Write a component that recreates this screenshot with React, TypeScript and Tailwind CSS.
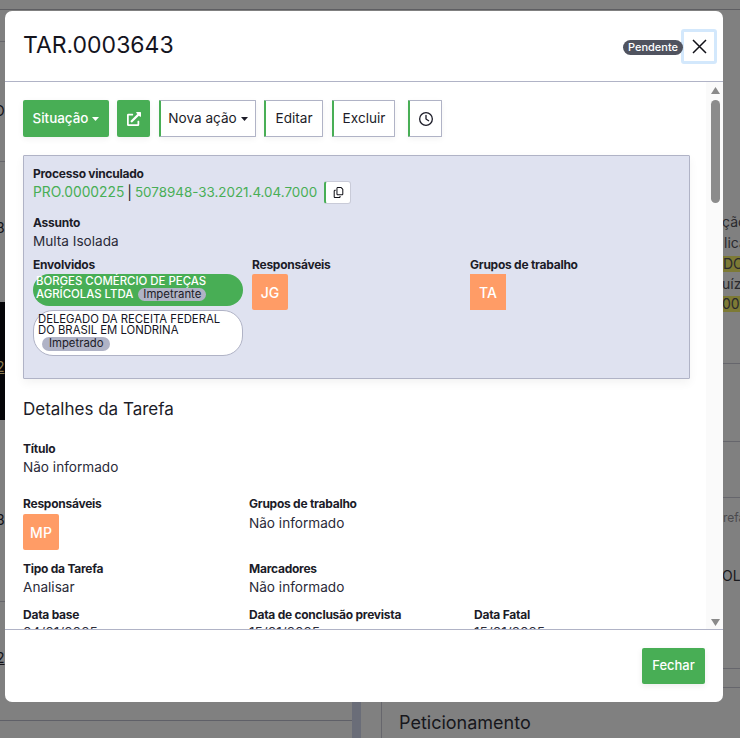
import React from "react";
import { FaRegCopy, FaRegClock } from "react-icons/fa6";
import { FaExternalLinkAlt } from "react-icons/fa";

const Caret = ({ color }: { color: string }) => (
  <svg width="7" height="4" viewBox="0 0 7 4" className="ml-1 mt-px" fill={color}>
    <path d="M0 0h7L3.5 4z" />
  </svg>
);

const Outline = ({ className, children }: { className: string; children: React.ReactNode }) => (
  <button className={`h-[37px] flex items-center justify-center bg-white border border-[#b0b3c6] border-l-[2px] border-l-[#48ae55] text-[13.6px] text-[#1c1c28] shadow-[0_2px_6px_rgba(0,0,0,0.05)] rounded-[1px] ${className}`}>
    {children}
  </button>
);

const Label = ({ children, className = "" }: { children: React.ReactNode; className?: string }) => (
  <div className={`text-[12px] leading-[14px] font-bold tracking-[-0.25px] text-[#1c1c28] ${className}`}>{children}</div>
);

const Value = ({ children, className = "" }: { children: React.ReactNode; className?: string }) => (
  <div className={`text-[13.6px] leading-[18px] text-[#2a2a38] ${className}`}>{children}</div>
);

const Avatar = ({ t, className = "" }: { t: string; className?: string }) => (
  <div className={`w-9 h-9 bg-[#ff9c66] text-white text-[14px] font-medium flex items-center justify-center ${className}`}>{t}</div>
);

const Bg = ({ x, y, w, h, c, children, cls = "" }: { x: number; y: number; w?: number; h?: number; c?: string; children?: React.ReactNode; cls?: string }) => (
  <div className={`absolute whitespace-nowrap ${cls}`} style={{ left: x, top: y, width: w, height: h, background: c }}>{children}</div>
);

export default function App() {
  return (
    <div className="relative w-[740px] h-[738px] overflow-hidden bg-[#808080] text-[#111118]" style={{ fontFamily: "Inter, 'Noto Sans', sans-serif" }}>
      {/* page dimmed behind the dialog */}
      <div aria-hidden className="absolute inset-0 text-[14px] leading-[20px]">
        <Bg x={0} y={9} w={740} h={1} c="#5e5e62" />
        <Bg x={0} y={41} w={5} h={1} c="#66666c" />
        <Bg x={0} y={161} w={5} h={1} c="#66666c" />
        <Bg x={0} y={302} w={5} h={118} c="#050508" />
        <Bg x={0} y={601} w={5} h={1} c="#66666c" />
        <Bg x={0} y={720} w={352} h={1} c="#5f6068" />
        <Bg x={352} y={702} w={9} h={36} c="#6a6d78" />
        <Bg x={381} y={702} w={1} h={36} c="#66666c" />
        <Bg x={-6} y={101}>O</Bg>
        <Bg x={-4} y={218}>8</Bg>
        <Bg x={-4} y={357} cls="text-[#8a7a50] underline">2</Bg>
        <Bg x={-4} y={510}>3</Bg>
        <Bg x={-4} y={648} cls="underline">2</Bg>
        <Bg x={723} y={363} w={17} h={1} c="#66666c" />
        <Bg x={723} y={441} w={17} h={1} c="#66666c" />
        <Bg x={723} y={497} w={17} h={1} c="#66666c" />
        <Bg x={723} y={668} w={17} h={1} c="#66666c" />
        <Bg x={723} y={687} w={17} h={1} c="#66666c" />
        <Bg x={723} y={256} w={17} h={16} c="#7d7a35" />
        <Bg x={723} y={296} w={17} h={16} c="#7d7a35" />
        <Bg x={722} y={212} cls="text-[#2a2a2e]">ção</Bg>
        <Bg x={724} y={233} cls="text-[#2a2a2e]">lica</Bg>
        <Bg x={723} y={254} cls="text-[#2a2a2e]">DO</Bg>
        <Bg x={722} y={274} cls="text-[#2a2a2e]">uízo</Bg>
        <Bg x={722} y={294} cls="text-[#2a2a2e]">000</Bg>
        <Bg x={723} y={508} cls="text-[12px] text-[#4a4a4e]">refa</Bg>
        <Bg x={722} y={566} cls="text-[#1a1a1e]">OLH</Bg>
        <Bg x={399} y={712} cls="text-[18px] leading-[22px] text-[#17171c]">Peticionamento</Bg>
      </div>

      {/* dialog */}
      <div className="absolute left-[5px] top-[11px] w-[718px] h-[691px] bg-white rounded-[7px] flex flex-col overflow-hidden">
        <header className="h-[71px] shrink-0 border-b border-[#b0b3c6] flex items-start pl-[18px] pr-[6px]">
          <h1 className="mt-[19px] text-[23px] leading-[30px] font-normal text-[#14141e]">TAR.0003643</h1>
          <div className="ml-auto mt-[29px] h-[15px] px-[5px] rounded-full bg-[#50535f] text-white text-[11px] leading-[15px] font-medium -mr-[2px] relative z-10">Pendente</div>
          <button className="mt-[18px] w-[36px] h-[35px] bg-white border-[3px] border-[#d3e8fc] rounded-[3px] flex items-center justify-center">
            <svg width="15" height="15" viewBox="0 0 15 15" stroke="#111118" strokeWidth="1.5" fill="none"><path d="M1 1l13 13M14 1L1 14" /></svg>
          </button>
        </header>

        <div className="flex-1 min-h-0 flex">
          <main className="w-[701px] overflow-hidden pl-[18px] pr-4 pt-[18px]">
            <div className="flex">
              <button className="h-[37px] w-[86px] rounded-[2px] bg-[#48ae55] text-white text-[13.4px] font-medium flex items-center justify-center shadow-[0_2px_6px_rgba(0,0,0,0.06)]">
                Situação<Caret color="#fff" />
              </button>
              <button className="ml-2 h-[37px] w-[33px] rounded-[2px] bg-[#48ae55] text-white flex items-center justify-center shadow-[0_2px_6px_rgba(0,0,0,0.06)]">
                <FaExternalLinkAlt size={14} />
              </button>
              <Outline className="ml-[9px] w-[97px]">Nova ação<Caret color="#1c1c28" /></Outline>
              <Outline className="ml-2 w-[59px]">Editar</Outline>
              <Outline className="ml-[9px] w-[63px]">Excluir</Outline>
              <Outline className="ml-[13px] w-[34px]"><FaRegClock size={14} /></Outline>
            </div>

            <section className="mt-[18px] h-[224px] bg-[#dfe2f0] border border-[#b0b3c6] rounded-[1px] pl-[9px] pt-[11px] shadow-[0_4px_10px_rgba(0,0,0,0.05)]">
              <Label>Processo vinculado</Label>
              <div className="flex items-center h-[24px] mt-[-1px]">
                <span className="text-[13.8px] text-[#48ae55]">PRO.0000225</span>
                <span className="text-[14px] mx-[3px] text-[#1c1c28]">|</span>
                <span className="text-[13.4px] text-[#48ae55]">5078948-33.2021.4.04.7000</span>
                <button className="ml-[7px] w-[27px] h-[23px] bg-white border border-[#c9cbd8] border-l-[2px] border-l-[#48ae55] rounded-[3px] flex items-center justify-center">
                  <FaRegCopy size={11} />
                </button>
              </div>
              <Label className="mt-[12px]">Assunto</Label>
              <Value className="mt-[2px]">Multa Isolada</Value>
              <div className="flex mt-[8px]">
                <div className="w-[219px]">
                  <Label>Envolvidos</Label>
                  <div className="mt-[2px] w-[210px] h-[32px] rounded-[16px] bg-[#48ae55] pl-[3px] pt-[1px] text-white text-[11.4px] leading-[13px] font-medium">
                    BORGES COMÉRCIO DE PEÇAS<br />
                    AGRÍCOLAS LTDA <span className="inline-block ml-[2px] px-[5px] h-[13px] rounded-full bg-[#b0b3c6] text-[#1c1c28] font-normal">Impetrante</span>
                  </div>
                  <div className="mt-[4px] w-[210px] h-[46px] rounded-[20px] bg-white border border-[#b0b3c6] pl-[4px] pt-[3px] text-[#14141e] text-[11.3px] leading-[11px]">
                    DELEGADO DA RECEITA FEDERAL<br />
                    DO BRASIL EM LONDRINA<br />
                    <span className="inline-block ml-[4px] mt-[1px] px-[7px] h-[14px] leading-[13px] rounded-full bg-[#b0b3c6] text-[#1c1c28]">Impetrado</span>
                  </div>
                </div>
                <div className="w-[218px]">
                  <Label>Responsáveis</Label>
                  <Avatar t="JG" className="mt-[2px] rounded-[2px]" />
                </div>
                <div>
                  <Label>Grupos de trabalho</Label>
                  <Avatar t="TA" className="mt-[2px]" />
                </div>
              </div>
            </section>

            <h2 className="mt-[20px] text-[17px] leading-[20px] font-normal text-[#1c1c28]">Detalhes da Tarefa</h2>
            <Label className="mt-[23px]">Título</Label>
            <Value className="mt-[2px]">Não informado</Value>

            <div className="grid grid-cols-[226px_225px_1fr] mt-[21px]">
              <div className="h-[65px]">
                <Label>Responsáveis</Label>
                <Avatar t="MP" className="mt-[3px] rounded-[2px]" />
              </div>
              <div className="col-span-2">
                <Label>Grupos de trabalho</Label>
                <Value className="mt-[3px]">Não informado</Value>
              </div>
              <div className="h-[46px]">
                <Label>Tipo da Tarefa</Label>
                <Value className="mt-[2px]">Analisar</Value>
              </div>
              <div className="col-span-2">
                <Label>Marcadores</Label>
                <Value className="mt-[2px]">Não informado</Value>
              </div>
              <div>
                <Label>Data base</Label>
                <Value className="mt-[1px]">04/01/2025</Value>
              </div>
              <div>
                <Label>Data de conclusão prevista</Label>
                <Value className="mt-[1px]">15/01/2025</Value>
              </div>
              <div>
                <Label>Data Fatal</Label>
                <Value className="mt-[1px]">15/01/2025</Value>
              </div>
            </div>
          </main>

          <div className="w-[17px] bg-[#fafafa] flex flex-col items-center pt-[5px] pb-[3px] pl-[1px]">
            <svg width="9" height="7" viewBox="0 0 9 7" fill="#8a8a8a" className="shrink-0"><path d="M4.5 0L9 7H0z" /></svg>
            <div className="mt-[6px] w-[9px] h-[103px] rounded-full bg-[#8c8c8c] shrink-0" />
            <svg width="9" height="7" viewBox="0 0 9 7" fill="#8a8a8a" className="mt-auto shrink-0"><path d="M0 0h9L4.5 7z" /></svg>
          </div>
        </div>

        <footer className="h-[73px] shrink-0 border-t border-[#b0b3c6] flex items-start justify-end pr-[18px] pt-[18px]">
          <button className="w-[63px] h-9 rounded-[2px] bg-[#48ae55] text-white text-[13px] font-medium shadow-[0_2px_6px_rgba(0,0,0,0.08)]">Fechar</button>
        </footer>
      </div>
    </div>
  );
}
